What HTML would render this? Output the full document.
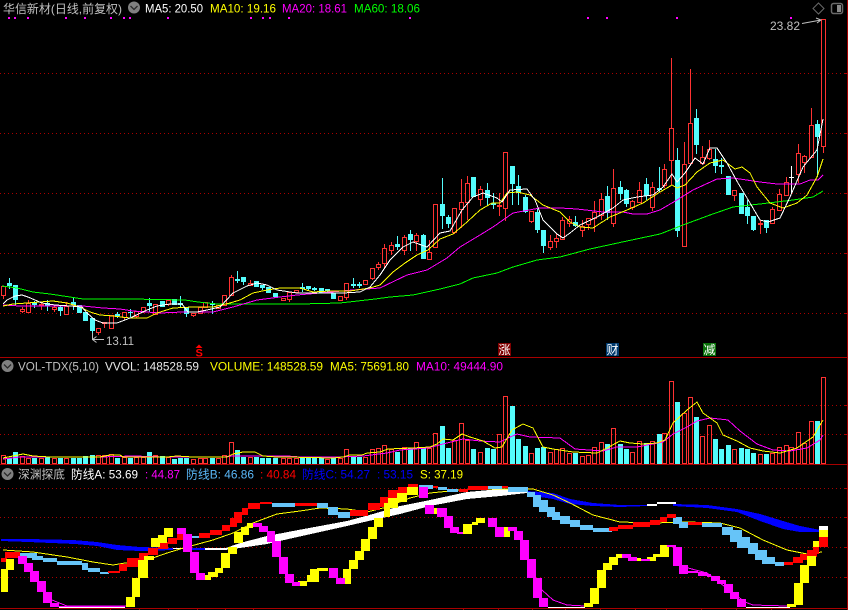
<!DOCTYPE html>
<html><head><meta charset="utf-8"><title>华信新材</title>
<style>html,body{margin:0;padding:0;background:#000;width:848px;height:610px;overflow:hidden}
svg{display:block}
text{font-family:"Liberation Sans","WenQuanYi Zen Hei","Noto Sans CJK SC",sans-serif;font-size:12px}
.l{fill:none;stroke-width:1;shape-rendering:crispEdges}
.c{shape-rendering:crispEdges}
</style></head><body>
<svg width="848" height="610" viewBox="0 0 848 610" xmlns="http://www.w3.org/2000/svg">
<rect width="848" height="610" fill="#000"/>
<!-- grid -->
<path class="c" fill="none" stroke="#aa0000" stroke-dasharray="1 3" d="M0 73.5H846M0 133.5H846M0 193.5H846M0 253.5H846M0 313.5H846M0 405.5H846M0 434.5H846M0 488.5H846M0 517.5H846M0 547.5H846M0 577.5H846"/>
<path class="c" fill="none" stroke="#a80000" d="M0 357.5H848M0 464.5H848M0 608.5H848M847.5 0V610M844 73.5H847M844 133.5H847M844 193.5H847M844 253.5H847M844 313.5H847M844 405.5H847M844 434.5H847M844 488.5H847M844 517.5H847M844 547.5H847M844 577.5H847M110.5 609V610M139.5 609V610M168.5 609V610M197.5 609V610M225.5 609V610M253.5 609V610M463.5 609V610M498.5 609V610M532.5 609V610M565.5 609V610M600.5 609V610M635.5 609V610M666.5 609V610M701.5 609V610M736.5 609V610M771.5 609V610"/>
<!-- magenta dots -->
<path class="c" fill="none" stroke="#ff00ff" stroke-width="2" d="M8 18h2M14 18h2M27 18h2M65 18h2M84 18h2M110 18h2M123 18h2M129 18h2M167 18h2M250 18h2M262 18h2M269 18h2M288 18h2M409 18h2M587 18h2M606 18h2M676 18h2M790 18h2"/>
<!-- cyan candles -->
<path class="c" fill="none" stroke="#54fcfc" d="M9.5 278V289M15.5 285V305M34.5 301V308M47.5 300V311M60.5 305V316M73.5 298V310M92.5 318V340M117.5 312V318M130.5 309V317M149.5 298V312M180.5 296V307M186.5 307V317M212.5 301V314M237.5 271V283M243.5 277V285M262.5 285V290M302.5 283V292M308.5 286V290M314.5 287V291M327.5 289V292M353.5 278V288M359.5 282V288M397.5 236V250M410.5 230V251M423.5 234V259M442.5 178V229M448.5 215V228M487.5 183V205M493.5 193V209M512.5 166V205M518.5 175V205M525.5 195V213M537.5 208V233M543.5 230V253M575.5 216V227M607.5 186V220M620.5 181V200M626.5 189V207M646.5 178V200M659.5 167V192M677.5 148V237M696.5 109V154M715.5 149V173M721.5 158V174M747.5 200V224M753.5 216V231M766.5 220V233M817.5 120V177"/>
<path class="c" fill="none" stroke="#54fcfc" stroke-width="5" d="M9.5 283V286M15.5 285V300M34.5 302V305M47.5 303V306M60.5 307V311M73.5 302V305M79.5 305V313M85.5 312V321M92.5 318V331M117.5 314V316M130.5 312V313M149.5 303V306M162.5 301V307M174.5 299V305M180.5 303V305M186.5 307V314M212.5 303V305M237.5 279V281M243.5 277V282M256.5 281V287M262.5 285V288M268.5 287V293M275.5 293V297M302.5 287V289M308.5 286V289M314.5 288V290M321.5 288V293M327.5 289V291M333.5 293V299M353.5 284V286M359.5 284V286M397.5 244V247M410.5 234V240M423.5 235V259M442.5 204V216M448.5 217V224M473.5 177V197M487.5 190V198M493.5 203V205M512.5 166V184M518.5 186V193M525.5 197V212M537.5 212V230M543.5 230V246M575.5 222V226M607.5 196V213M620.5 187V194M626.5 190V204M646.5 184V196M659.5 188V190M677.5 160V231M696.5 118V145M715.5 159V166M721.5 165V167M728.5 176V195M741.5 193V214M747.5 207V216M753.5 216V230M766.5 220V228M817.5 124V137"/>
<path class="c" fill="none" stroke="#fff" d="M791.5 166V193M789 177.5H794"/>
<!-- red candles -->
<path class="c" fill="none" stroke="#ff3232" d="M3.5 286V299M22.5 307V313M28.5 300V312M41.5 303V310M54.5 306V312M66.5 302V314M98.5 328V335M104.5 322V328M124.5 312V320M136.5 311V318M143.5 307V313M168.5 300V306M193.5 313V317M231.5 275V295M250.5 280V285M283.5 298V301M289.5 292V302M346.5 283V300M365.5 280V285M372.5 268V280M378.5 262V270M384.5 244V268M391.5 242V255M404.5 235V255M416.5 233V251M429.5 240V252M454.5 232V234M461.5 179V228M467.5 176V220M480.5 186V206M499.5 193V216M505.5 208V221M531.5 221V223M550.5 235V250M556.5 234V248M562.5 217V239M569.5 216V227M582.5 220V237M588.5 224V230M594.5 201V232M601.5 193V220M613.5 169V227M632.5 200V210M639.5 182V203M652.5 182V211M664.5 164V188M671.5 58V185M684.5 142V164M690.5 69V123M702.5 146V165M709.5 140V160M734.5 195V201M760.5 220V234M772.5 207V209M779.5 189V194M786.5 177V182M798.5 144V183M804.5 155V173M811.5 108V125M823.5 146V153"/>
<path class="c" fill="#000" stroke="#ff3232" d="M1.5 286.5h4V295.5h-4zM20.5 309.5h4V311.5h-4zM26.5 303.5h4V312.5h-4zM39.5 304.5h4V305.5h-4zM52.5 307.5h4V309.5h-4zM64.5 306.5h4V314.5h-4zM96.5 328.5h4V332.5h-4zM102.5 322.5h4V323.5h-4zM109.5 315.5h4V328.5h-4zM122.5 312.5h4V317.5h-4zM134.5 311.5h4V316.5h-4zM141.5 307.5h4V311.5h-4zM153.5 304.5h4V314.5h-4zM166.5 300.5h4V304.5h-4zM191.5 313.5h4V315.5h-4zM198.5 307.5h4V313.5h-4zM203.5 302.5h4V307.5h-4zM216.5 305.5h4V308.5h-4zM222.5 295.5h4V305.5h-4zM229.5 277.5h4V295.5h-4zM248.5 283.5h4V285.5h-4zM281.5 298.5h4V300.5h-4zM287.5 292.5h4V299.5h-4zM294.5 290.5h4V292.5h-4zM338.5 296.5h4V300.5h-4zM344.5 283.5h4V297.5h-4zM363.5 280.5h4V284.5h-4zM370.5 268.5h4V278.5h-4zM376.5 264.5h4V267.5h-4zM382.5 248.5h4V263.5h-4zM389.5 245.5h4V250.5h-4zM402.5 237.5h4V250.5h-4zM414.5 235.5h4V241.5h-4zM427.5 252.5h4V259.5h-4zM433.5 204.5h4V247.5h-4zM452.5 208.5h4V232.5h-4zM459.5 202.5h4V209.5h-4zM465.5 183.5h4V202.5h-4zM478.5 189.5h4V199.5h-4zM497.5 205.5h4V206.5h-4zM503.5 152.5h4V208.5h-4zM529.5 211.5h4V221.5h-4zM548.5 241.5h4V247.5h-4zM554.5 238.5h4V241.5h-4zM560.5 220.5h4V239.5h-4zM567.5 219.5h4V223.5h-4zM580.5 226.5h4V230.5h-4zM586.5 218.5h4V224.5h-4zM592.5 212.5h4V218.5h-4zM599.5 199.5h4V215.5h-4zM611.5 188.5h4V223.5h-4zM630.5 201.5h4V207.5h-4zM637.5 190.5h4V202.5h-4zM650.5 187.5h4V207.5h-4zM662.5 169.5h4V185.5h-4zM669.5 128.5h4V160.5h-4zM682.5 164.5h4V246.5h-4zM688.5 123.5h4V163.5h-4zM700.5 157.5h4V163.5h-4zM707.5 149.5h4V158.5h-4zM732.5 190.5h4V195.5h-4zM758.5 223.5h4V224.5h-4zM770.5 209.5h4V223.5h-4zM777.5 194.5h4V210.5h-4zM784.5 182.5h4V195.5h-4zM796.5 153.5h4V174.5h-4zM802.5 156.5h4V162.5h-4zM809.5 125.5h4V157.5h-4zM821.5 19.5h4V146.5h-4z"/>
<!-- MA lines -->
<polyline class="l" stroke="#00ff00" points="2,286 17,288 33,292 50,294 70,297 83,299 130,299 185,300 198,302 217,304 260,304 300,304 340,303 375,299 390,297 413,295 440,289 460,284 473,278 497,273 513,267 537,260 560,257 590,249 627,241 660,234 683,225 710,215 733,207 760,204 793,200 813,197 823,191"/>
<polyline class="l" stroke="#ff00ff" points="3,305 20,306 40,306 67,306 83,306 103,308 120,309 133,311 160,313 183,312 213,312 233,307 257,300 280,297 297,295 320,293 353,290 380,288 407,275 427,270 447,258 460,247 480,235 493,227 513,213 540,208 560,208 577,209 603,212 623,212 633,214 647,214 660,210 677,200 693,190 717,179 733,178 760,182 777,184 800,184 810,180 818,180 823,175"/>
<polyline class="l" stroke="#ffff00" points="3,306 13,304 27,303 40,302 53,301 67,303 80,307 90,312 100,315 113,316 130,318 147,318 157,313 173,308 193,307 213,307 230,303 240,300 253,293 267,290 280,288 300,288 313,292 330,291 350,291 370,288 380,285 393,272 405,263 417,255 428,250 440,239 453,234 467,222 480,210 492,203 500,203 507,193 517,192 530,195 543,205 560,212 570,222 580,227 593,228 610,217 627,210 643,203 660,192 672,185 677,188 685,185 697,172 710,163 723,160 735,169 742,167 750,173 757,187 770,203 783,208 797,203 807,195 817,177 823,159"/>
<polyline class="l" stroke="#ffffff" points="3,304 7,300 15,296 22,295 28,297 35,300 42,303 55,305 70,306 82,307 87,313 95,320 103,323 117,323 125,320 130,318 147,310 157,306 170,304 182,304 188,312 197,312 207,310 220,307 233,293 247,286 257,283 267,285 277,290 297,293 327,293 343,293 360,292 370,287 380,275 390,260 403,247 413,242 427,247 440,233 450,231 462,210 473,197 483,193 497,198 502,202 510,190 527,189 535,200 543,220 557,234 563,238 570,233 580,225 597,217 613,208 623,200 637,197 653,195 663,187 672,174 677,182 685,173 695,158 703,164 710,148 717,148 727,163 738,183 750,203 760,220 768,222 780,218 790,197 803,167 817,150 823,119"/>
<!-- labels on price panel -->
<text x="770" y="30" fill="#c0c0c0" textLength="30" lengthAdjust="spacingAndGlyphs">23.82</text>
<path fill="none" stroke="#c0c0c0" d="M802 23.5L821 20M816 18l5 2-4 3"/>
<text x="106" y="345" fill="#c0c0c0" textLength="28" lengthAdjust="spacingAndGlyphs">13.11</text>
<path fill="none" stroke="#c0c0c0" d="M92.5 333V339.5H104M92.5 339.5l4-3M92.5 339.5l4 3"/>
<path d="M199 344.5l3.5 3.5h-7z" fill="#ff0000"/>
<text x="195.500" y="356.500" fill="#ff0000" style="font-size:11px;font-weight:bold">S</text>
<rect x="498" y="343" width="13" height="13" fill="#800000"/>
<text x="498.500" y="354" fill="#fff" style="font-size:12px">涨</text>
<rect x="606" y="343" width="13" height="13" fill="#003a6e"/>
<text x="606.500" y="354" fill="#fff" style="font-size:12px">财</text>
<rect x="703" y="343" width="13" height="13" fill="#0a720a"/>
<text x="703.500" y="354" fill="#fff" style="font-size:12px">减</text>
<!-- top header -->
<text x="3" y="13" fill="#c0c0c0" textLength="119" lengthAdjust="spacingAndGlyphs">华信新材(日线,前复权)</text>
<circle cx="134" cy="7.500" r="6" fill="#808080"/><path d="M130.500 6l3.500 3.500L137.500 6" fill="none" stroke="#2a2a2a" stroke-width="1.300"/>
<text x="145" y="12.500" fill="#fff" textLength="58" lengthAdjust="spacingAndGlyphs">MA5: 20.50</text>
<text x="210" y="12.500" fill="#ffff00" textLength="66" lengthAdjust="spacingAndGlyphs">MA10: 19.16</text>
<text x="282" y="12.500" fill="#ff00ff" textLength="65" lengthAdjust="spacingAndGlyphs">MA20: 18.61</text>
<text x="354" y="12.500" fill="#00ff00" textLength="66" lengthAdjust="spacingAndGlyphs">MA60: 18.06</text>
<path fill="none" stroke="#6a6a6a" d="M818.500 3L824 8.500L818.500 14L813 8.500z"/>
<rect x="831.500" y="3.500" width="11" height="10" rx="2" fill="none" stroke="#6a6a6a" stroke-width="1.500"/><rect x="837" y="5" width="4" height="7" fill="#8a8a8a"/>
<!-- volume header -->
<circle cx="7.500" cy="366" r="6" fill="#808080"/><path d="M4 364.500l3.500 3.500L11 364.500" fill="none" stroke="#2a2a2a" stroke-width="1.300"/>
<text x="18" y="370.500" fill="#c0c0c0" textLength="81" lengthAdjust="spacingAndGlyphs">VOL-TDX(5,10)</text>
<text x="105" y="370.500" fill="#e8e8e8" textLength="94" lengthAdjust="spacingAndGlyphs">VVOL: 148528.59</text>
<text x="210" y="370.500" fill="#ffff00" textLength="113" lengthAdjust="spacingAndGlyphs">VOLUME: 148528.59</text>
<text x="330" y="370.500" fill="#ffff00" textLength="79" lengthAdjust="spacingAndGlyphs">MA5: 75691.80</text>
<text x="416" y="370.500" fill="#ff00ff" textLength="87" lengthAdjust="spacingAndGlyphs">MA10: 49444.90</text>
<!-- volume bars -->
<path class="c" fill="none" stroke="#54fcfc" stroke-width="5" d="M9.500 458V464M15.500 452V464M34.500 458V464M47.500 457V464M60.500 458V464M73.500 458V464M79.500 458V464M85.500 456V464M92.500 455V464M117.500 458V464M130.500 458V464M149.500 452V464M162.500 456V464M174.500 459V464M180.500 458V464M186.500 458V464M212.500 458V464M237.500 450V464M243.500 457V464M256.500 457V464M262.500 458V464M268.500 458V464M275.500 458V464M302.500 458V464M308.500 458V464M314.500 458V464M321.500 458V464M333.500 458V464M353.500 457V464M359.500 457V464M397.500 452V464M410.500 448V464M423.500 448V464M442.500 426V464M448.500 448V464M473.500 449V464M487.500 448V464M493.500 449V464M512.500 406V464M518.500 439V464M525.500 446V464M537.500 448V464M543.500 447V464M575.500 453V464M607.500 444V464M620.500 444V464M626.500 449V464M646.500 443V464M659.500 434V464M677.500 402V464M696.500 417V464M715.500 439V464M721.500 449V464M728.500 445V464M741.500 448V464M747.500 449V464M753.500 453V464M766.500 454V464M817.500 421V464"/>
<path class="c" fill="none" stroke="#ff3232" d="M1.500 455.500h4V463.500h-4zM20.500 456.500h4V463.500h-4zM26.500 458.500h4V463.500h-4zM39.500 458.500h4V463.500h-4zM52.500 458.500h4V463.500h-4zM64.500 458.500h4V463.500h-4zM96.500 455.500h4V463.500h-4zM102.500 455.500h4V463.500h-4zM109.500 454.500h4V463.500h-4zM122.500 457.500h4V463.500h-4zM134.500 457.500h4V463.500h-4zM141.500 457.500h4V463.500h-4zM153.500 455.500h4V463.500h-4zM166.500 457.500h4V463.500h-4zM191.500 459.500h4V463.500h-4zM198.500 458.500h4V463.500h-4zM203.500 458.500h4V463.500h-4zM216.500 458.500h4V463.500h-4zM222.500 455.500h4V463.500h-4zM229.500 442.500h4V463.500h-4zM248.500 457.500h4V463.500h-4zM281.500 458.500h4V463.500h-4zM287.500 458.500h4V463.500h-4zM294.500 458.500h4V463.500h-4zM325.500 459.500h4V463.500h-4zM338.500 458.500h4V463.500h-4zM344.500 449.500h4V463.500h-4zM363.500 457.500h4V463.500h-4zM370.500 449.500h4V463.500h-4zM376.500 448.500h4V463.500h-4zM382.500 445.500h4V463.500h-4zM389.500 449.500h4V463.500h-4zM402.500 447.500h4V463.500h-4zM414.500 442.500h4V463.500h-4zM427.500 448.500h4V463.500h-4zM433.500 433.500h4V463.500h-4zM452.500 440.500h4V463.500h-4zM459.500 423.500h4V463.500h-4zM465.500 440.500h4V463.500h-4zM478.500 452.500h4V463.500h-4zM497.500 434.500h4V463.500h-4zM503.500 396.500h4V463.500h-4zM529.500 453.500h4V463.500h-4zM548.500 452.500h4V463.500h-4zM554.500 449.500h4V463.500h-4zM560.500 448.500h4V463.500h-4zM567.500 453.500h4V463.500h-4zM580.500 456.500h4V463.500h-4zM586.500 455.500h4V463.500h-4zM592.500 447.500h4V463.500h-4zM599.500 442.500h4V463.500h-4zM611.500 428.500h4V463.500h-4zM630.500 452.500h4V463.500h-4zM637.500 441.500h4V463.500h-4zM650.500 441.500h4V463.500h-4zM662.500 433.500h4V463.500h-4zM669.500 381.500h4V463.500h-4zM682.500 413.500h4V463.500h-4zM688.500 397.500h4V463.500h-4zM700.500 436.500h4V463.500h-4zM707.500 425.500h4V463.500h-4zM732.500 449.500h4V463.500h-4zM758.500 454.500h4V463.500h-4zM770.500 453.500h4V463.500h-4zM777.500 447.500h4V463.500h-4zM784.500 445.500h4V463.500h-4zM789.500 447.500h4V463.500h-4zM796.500 432.500h4V463.500h-4zM802.500 443.500h4V463.500h-4zM809.500 421.500h4V463.500h-4zM821.500 377.500h4V463.500h-4z"/>
<polyline class="l" stroke="#ff00ff" points="3,459 20,457 43,457 67,457 100,457 133,456 167,457 223,457 233,456 287,456 300,457 340,457 363,456 387,453 400,450 428,448 443,444 463,439 480,441 500,442 508,438 517,434 530,437 560,438 575,449 603,451 617,447 637,447 663,442 673,434 687,427 697,421 710,418 728,420 740,431 757,444 773,450 790,451 807,448 820,440 823,435"/>
<polyline class="l" stroke="#ffff00" points="3,458 13,456 23,454 33,456 50,457 63,457 83,457 100,457 110,455 120,455 123,457 147,457 167,457 177,456 193,457 220,457 227,457 233,454 243,452 255,452 263,456 277,457 287,457 333,458 343,457 350,455 362,455 367,453 380,452 388,449 413,448 430,447 437,444 443,439 453,440 462,434 470,437 483,441 495,448 502,447 512,430 523,424 533,428 543,447 553,449 573,452 597,453 607,448 620,441 630,443 643,444 657,443 665,440 673,423 687,410 697,402 703,413 717,423 723,435 737,441 750,448 763,451 780,453 797,448 813,437 823,420"/>
<!-- indicator header -->
<circle cx="7.500" cy="474" r="6" fill="#808080"/><path d="M4 472.500l3.500 3.500L11 472.500" fill="none" stroke="#2a2a2a" stroke-width="1.300"/>
<text x="18" y="478.500" fill="#c0c0c0" textLength="47" lengthAdjust="spacingAndGlyphs">深渊探底</text>
<text x="71" y="478.500" fill="#fff" textLength="67" lengthAdjust="spacingAndGlyphs">防线A: 53.69</text>
<text x="145" y="478.500" fill="#ff00ff" textLength="35" lengthAdjust="spacingAndGlyphs">: 44.87</text>
<text x="186" y="478.500" fill="#5ab8f8" textLength="68" lengthAdjust="spacingAndGlyphs">防线B: 46.86</text>
<text x="260" y="478.500" fill="#ff0000" textLength="36" lengthAdjust="spacingAndGlyphs">: 40.84</text>
<text x="302" y="478.500" fill="#0000ff" textLength="68" lengthAdjust="spacingAndGlyphs">防线C: 54.27</text>
<text x="377" y="478.500" fill="#0000ff" textLength="36" lengthAdjust="spacingAndGlyphs">: 53.15</text>
<text x="420" y="478.500" fill="#ffff00" textLength="43" lengthAdjust="spacingAndGlyphs">S: 37.19</text>
<!-- indicator: blue/white ribbon -->
<path class="c" fill="#0000ff" d="M1 539L28 539L73 540L97 542L117 545L140 547L173 548L173 550L140 551L117 550L97 546L75 544L28 542L1 541zM183 548H205V550H183zM527 491L553 493L570 499L593 503L620 505L647 505L647 506L620 507L593 506L570 504L553 499L527 495zM673 504L707 505L737 509L760 514L783 521L800 526L820 530L820 532L800 532L783 529L760 521L737 512L707 508L673 506z"/>
<path class="c" fill="#fff" d="M173 548H183V549H173zM205 548H227V550H205zM647 504H657V506H647zM657 502H676V504H657zM223 549L240 543L267 536L293 531L320 526L347 521L373 514L400 506L430 500L467 492L500 489L527 489L527 493L500 496L467 499L430 506L400 514L373 520L347 526L320 532L293 538L267 544L240 548L223 550z"/>
<!-- thin curves -->
<polyline class="l" stroke="#ffff00" points="3,550 33,552 67,557 93,562 113,565 125,563 147,560 167,553 187,547 213,540 233,533 253,523 277,514 300,511 320,508 347,509 367,512 387,507 410,498 430,493 440,492 470,489 503,489 533,489 553,495 570,503 593,515 620,522 653,523 687,522 720,523 740,528 763,540 787,550 807,554 822,552"/>
<path class="c" fill="none" stroke="#fff" d="M59 607.500H125M548 607.500H585M746 607.500H790"/>
<polyline class="l" stroke="#ff00ff" points="52,600 67,606 127,606"/>
<polyline class="l" stroke="#ff00ff" points="542,590 553,600 567,605 585,606"/>
<polyline class="l" stroke="#ff00ff" points="688,568 707,573 745,602 753,605 787,606"/>
<!-- sky ribbon -->
<path class="c" fill="#66c4f8" d="M18 553H37V558H18zM32 556H43V560H32zM43 558H57V562H43zM57 561H82V565H57zM82 563H88V570H82zM88 568H100V572H88zM100 572H109V574H100zM183 536H199V538H183zM272 503H295V507H272zM317 503H328V508H317zM328 507H338V515H328zM338 512H350V518H338zM419 485H433V489H419zM438 487H447V490H438zM447 489H458V492H447zM488 486H502V489H488zM508 487H528V492H508zM527 492H535V497H527zM533 495H541V507H533zM539 500H548V512H539zM547 507H555V517H547zM552 512H560V520H552zM560 516H570V524H560zM570 520H580V527H570zM580 525H593V530H580zM593 528H612V532H593zM673 517H682V524H673zM679 522H688V528H679zM702 523H722V527H702zM722 527H733V535H722zM730 530H742V542H730zM737 537H750V548H737zM748 543H758V554H748zM755 550H767V560H755zM762 557H775V564H762zM775 562H784V566H775z"/>
<!-- red ribbon -->
<path class="c" fill="#ff0000" d="M1 558H7V562H1zM5 552H20V558H5zM108 571H120V573H108zM119 564H127V571H119zM127 558H139V567H127zM139 553H148V560H139zM148 548H158V555H148zM158 542H168V549H158zM168 538H177V544H168zM177 534H183V540H177zM199 533H210V538H199zM210 530H222V535H210zM222 525H230V531H222zM230 518H237V527H230zM234 512H242V523H234zM242 508H248V515H242zM248 503H260V509H248zM260 502H272V504H260zM295 503H317V506H295zM350 510H368V516H350zM368 503H380V510H368zM380 497H388V507H380zM388 490H398V500H388zM398 487H408V493H398zM408 484H418V490H408zM433 486H438V488H433zM459 489H468V492H459zM468 486H488V490H468zM502 486H508V488H502zM609 527H618V531H609zM618 525H633V529H618zM633 522H650V527H633zM650 520H660V525H650zM660 517H667V522H660zM667 514H676V518H667zM688 522H702V525H688zM784 562H793V565H784zM793 557H803V563H793zM800 554H808V560H800zM807 550H817V557H807zM813 547H819V554H813zM819 537H828V547H819z"/>
<!-- yellow steps -->
<path class="c" fill="#ffff00" d="M1 569H8V592H1zM6 559H14V570H6zM126 597H135V607H126zM132 578H140V597H132zM138 560H148V578H138zM144 556H154V560H144zM151 538H160V547H151zM158 535H167V543H158zM164 528H173V537H164zM205 575H211V580H205zM208 572H218V577H208zM215 568H223V573H215zM221 553H230V568H221zM228 547H237V554H228zM234 532H243V543H234zM241 527H249V535H241zM247 523H253V528H247zM298 581H307V586H298zM307 575H319V582H307zM310 569H319V580H310zM317 568H328V571H317zM343 569H351V584H343zM349 560H358V569H349zM355 551H364V560H355zM361 539H370V551H361zM368 527H377V539H368zM374 518H383V527H374zM384 503H390V517H384zM388 498H398V508H388zM397 493H407V502H397zM407 487H418V495H407zM434 508H438V514H434zM463 524H472V534H463zM472 522H478V525H472zM476 518H485V523H476zM504 527H510V537H504zM584 603H593V607H584zM590 588H599V604H590zM597 570H606V588H597zM603 563H612V570H603zM609 557H618V565H609zM616 554H622V558H616zM637 558H641V561H637zM647 557H656V561H647zM653 554H660V557H653zM660 545H669V557H660zM787 604H796V607H787zM794 583H803V605H794zM800 565H809V583H800zM807 556H816V566H807zM813 541H819V547H813zM819 530H828V537H819z"/>
<!-- magenta steps -->
<path class="c" fill="#ff00ff" d="M18 556H27V564H18zM24 563H33V572H24zM30 571H39V582H30zM37 581H46V592H37zM43 592H52V603H43zM50 603H59V607H50zM59 606H125V607H59zM177 528H186V534H177zM183 534H192V552H183zM190 552H199V573H190zM196 573H205V580H196zM253 523H262V527H253zM259 526H268V532H259zM267 531H275V542H267zM272 541H281V557H272zM279 557H288V574H279zM285 574H294V583H285zM292 582H300V586H292zM329 568H338V578H329zM336 578H345V584H336zM419 487H428V498H419zM425 505H434V514H425zM437 508H447V517H437zM444 516H453V528H444zM450 527H459V533H450zM457 532H463V534H457zM488 518H497V527H488zM495 527H504V537H495zM508 527H517V531H508zM514 531H523V540H514zM520 540H529V560H520zM527 559H536V578H527zM533 578H542V598H533zM539 598H548V607H539zM622 554H631V558H622zM628 557H637V561H628zM641 559H650V561H641zM667 545H676V547H667zM673 547H682V566H673zM679 565H688V574H679zM688 571H698V573H688zM698 572H707V576H698zM707 574H711V577H707zM711 576H720V581H711zM717 580H726V584H717zM724 584H733V593H724zM730 592H739V599H730zM737 599H746V607H737z"/>
<path class="c" fill="#fff" d="M819 526H828V530H819z"/>
</svg>
</body></html>
